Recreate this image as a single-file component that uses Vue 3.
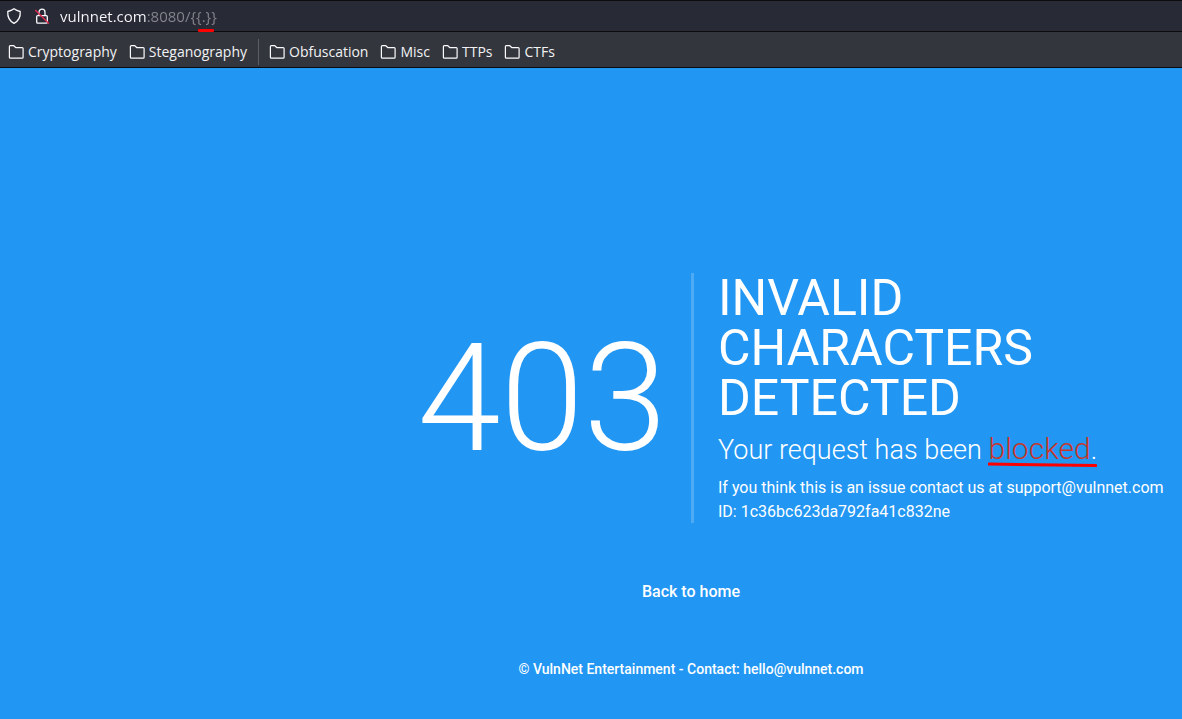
<script setup>
import { ref } from 'vue'

const url = ref('vulnnet.com:8080/{{.}}')
const groups = [
  ['Cryptography', 'Steganography'],
  ['Obfuscation', 'Misc', 'TTPs', 'CTFs'],
]
</script>

<template>
  <div class="browser">
    <header>
      <form class="address-bar" @submit.prevent>
        <button type="button" class="icon-button" aria-label="Tracking protection">
          <svg width="16" height="18" viewBox="0 0 16 18" fill="none" stroke="#fbfbfe" stroke-width="1.3" stroke-linejoin="round">
            <path d="M8 1.7C10 3.1 12 3.9 14.2 4.5 14.6 9.6 12.8 13.8 8 16.4 3.2 13.8 1.4 9.6 1.8 4.5 4 3.9 6 3.1 8 1.7Z" />
          </svg>
        </button>
        <button type="button" class="icon-button" aria-label="Connection is not secure">
          <svg width="16" height="18" viewBox="0 0 16 18" fill="none" stroke="#fbfbfe" stroke-width="1.3">
            <path d="M5 8.6V5.2a3 3 0 0 1 6 0v3.4" />
            <rect x="2.7" y="8.6" width="10.6" height="7.6" rx="1" />
            <path d="M1.2 3 14.8 16.6" stroke="#e22850" stroke-width="1.4" />
          </svg>
        </button>
        <div class="url-field">
          <input v-model="url" class="url" type="text" aria-label="Address" spellcheck="false" />
          <span class="url-mark"></span>
        </div>
      </form>
      <nav class="bookmarks" aria-label="Bookmarks">
        <div v-for="(group, i) in groups" :key="i" class="bookmark-group">
          <button v-for="name in group" :key="name" type="button" class="bookmark">
            <svg width="16" height="14" viewBox="0 0 16 14" fill="none" stroke="#fbfbfe" stroke-width="1.2" stroke-linejoin="round">
              <path d="M1.4 1.6Q1.4 .7 2.3 .7H5.8L8 2.7H14.2Q15.1 2.7 15.1 3.6V12.2Q15.1 13.1 14.2 13.1H2.3Q1.4 13.1 1.4 12.2Z" />
            </svg>
            <span>{{ name }}</span>
          </button>
        </div>
      </nav>
    </header>

    <main class="page">
      <section class="error">
        <div class="code">403</div>
        <div class="details">
          <h1>INVALID CHARACTERS DETECTED</h1>
          <h2>Your request has been <span class="blocked"><em>blocked</em>.<svg class="stroke" viewBox="0 0 110 6" preserveAspectRatio="none"><path d="M1 2 109 3.5" stroke="#ff0000" stroke-width="3" stroke-linecap="round" /></svg></span></h2>
          <p>If you think this is an issue contact us at support@vulnnet.com<br />ID: 1c36bc623da792fa41c832ne</p>
        </div>
      </section>
      <a class="home" href="#">Back to home</a>
      <footer>© VulnNet Entertainment - Contact: hello@vulnnet.com</footer>
    </main>
  </div>
</template>

<style>
body {
  margin: 0;
  background: #2196f3;
}
</style>

<style scoped>
.browser {
  min-height: 100vh;
  display: flex;
  flex-direction: column;
  box-sizing: border-box;
  overflow: hidden;
}
header {
  font-family: "Open Sans", "Noto Sans", sans-serif;
  border-top: 1px solid #0c0c0d;
}
button {
  font: inherit;
  color: inherit;
  background: none;
  border: 0;
  padding: 0;
}
.address-bar {
  display: flex;
  align-items: center;
  height: 30px;
  padding-left: 6px;
  background: #282a36;
  border-bottom: 1px solid #0c0c0d;
}
.icon-button {
  display: flex;
  margin-right: 12px;
}
.icon-button svg,
.bookmark svg {
  display: block;
}
.url-field {
  position: relative;
  flex: 1;
  display: flex;
  margin-left: -2px;
}
.url {
  width: 100%;
  height: 30px;
  padding: 0;
  border: 0;
  outline: 0;
  font: 15px/20px "Open Sans", "Noto Sans", sans-serif;
  color: transparent;
  background: linear-gradient(to right, #fbfbfe 86px, #85868d 86px);
  background-clip: text;
}
.url-mark {
  position: absolute;
  left: 138px;
  bottom: -1px;
  width: 16px;
  height: 3px;
  border-radius: 1px;
  background: #ff0000;
}
.bookmarks {
  display: flex;
  align-items: center;
  box-sizing: border-box;
  height: 36px;
  padding: 4px 0 0 8px;
  background: #33363d;
  border-bottom: 1px solid #0c0c0d;
  color: #f2f2f4;
  font-size: 14px;
  line-height: 20px;
}
.bookmark-group {
  display: flex;
  align-items: center;
  gap: 12px;
  height: 26px;
}
.bookmark-group + .bookmark-group {
  margin-left: 11px;
  padding-left: 10px;
  border-left: 1px solid #5b5e64;
}
.bookmark {
  display: flex;
  align-items: center;
  gap: 4px;
}
.page {
  flex: 1;
  display: flex;
  flex-direction: column;
  align-items: center;
  justify-content: flex-end;
  margin-right: -200px;
  padding-bottom: 40px;
  background: #2196f3;
  color: #fff;
  font-family: Roboto, sans-serif;
}
.error {
  width: 100%;
  display: grid;
  grid-template-columns: 1fr 1fr;
  align-items: center;
}
.code {
  padding-right: 24px;
  text-align: right;
  font-size: 150px;
  line-height: 152px;
  padding-top: 2px;
  font-weight: 300;
}
.details {
  box-sizing: border-box;
  height: 250px;
  padding-left: 24px;
  padding-right: 200px;
  border-left: 3px solid #4dabf5;
}
h1 {
  max-width: 400px;
  margin: 0;
  font-size: 50px;
  line-height: 50px;
  font-weight: 400;
}
h2 {
  margin: 8px 0;
  font-size: 27px;
  line-height: 36px;
  font-weight: 300;
  white-space: nowrap;
}
.blocked {
  position: relative;
}
.blocked em {
  font-size: 30px;
  font-style: normal;
  color: #c8352a;
}
.stroke {
  position: absolute;
  left: 0;
  bottom: -2px;
  width: 100%;
  height: 6px;
}
p {
  margin: 0;
  font-size: 16px;
  line-height: 24px;
  white-space: nowrap;
}
.home {
  margin-top: 57px;
  font-size: 16px;
  line-height: 24px;
  font-weight: 500;
  color: inherit;
  text-decoration: none;
}
footer {
  margin-top: 55px;
  font-size: 14px;
  line-height: 20px;
  font-weight: 500;
}
</style>
